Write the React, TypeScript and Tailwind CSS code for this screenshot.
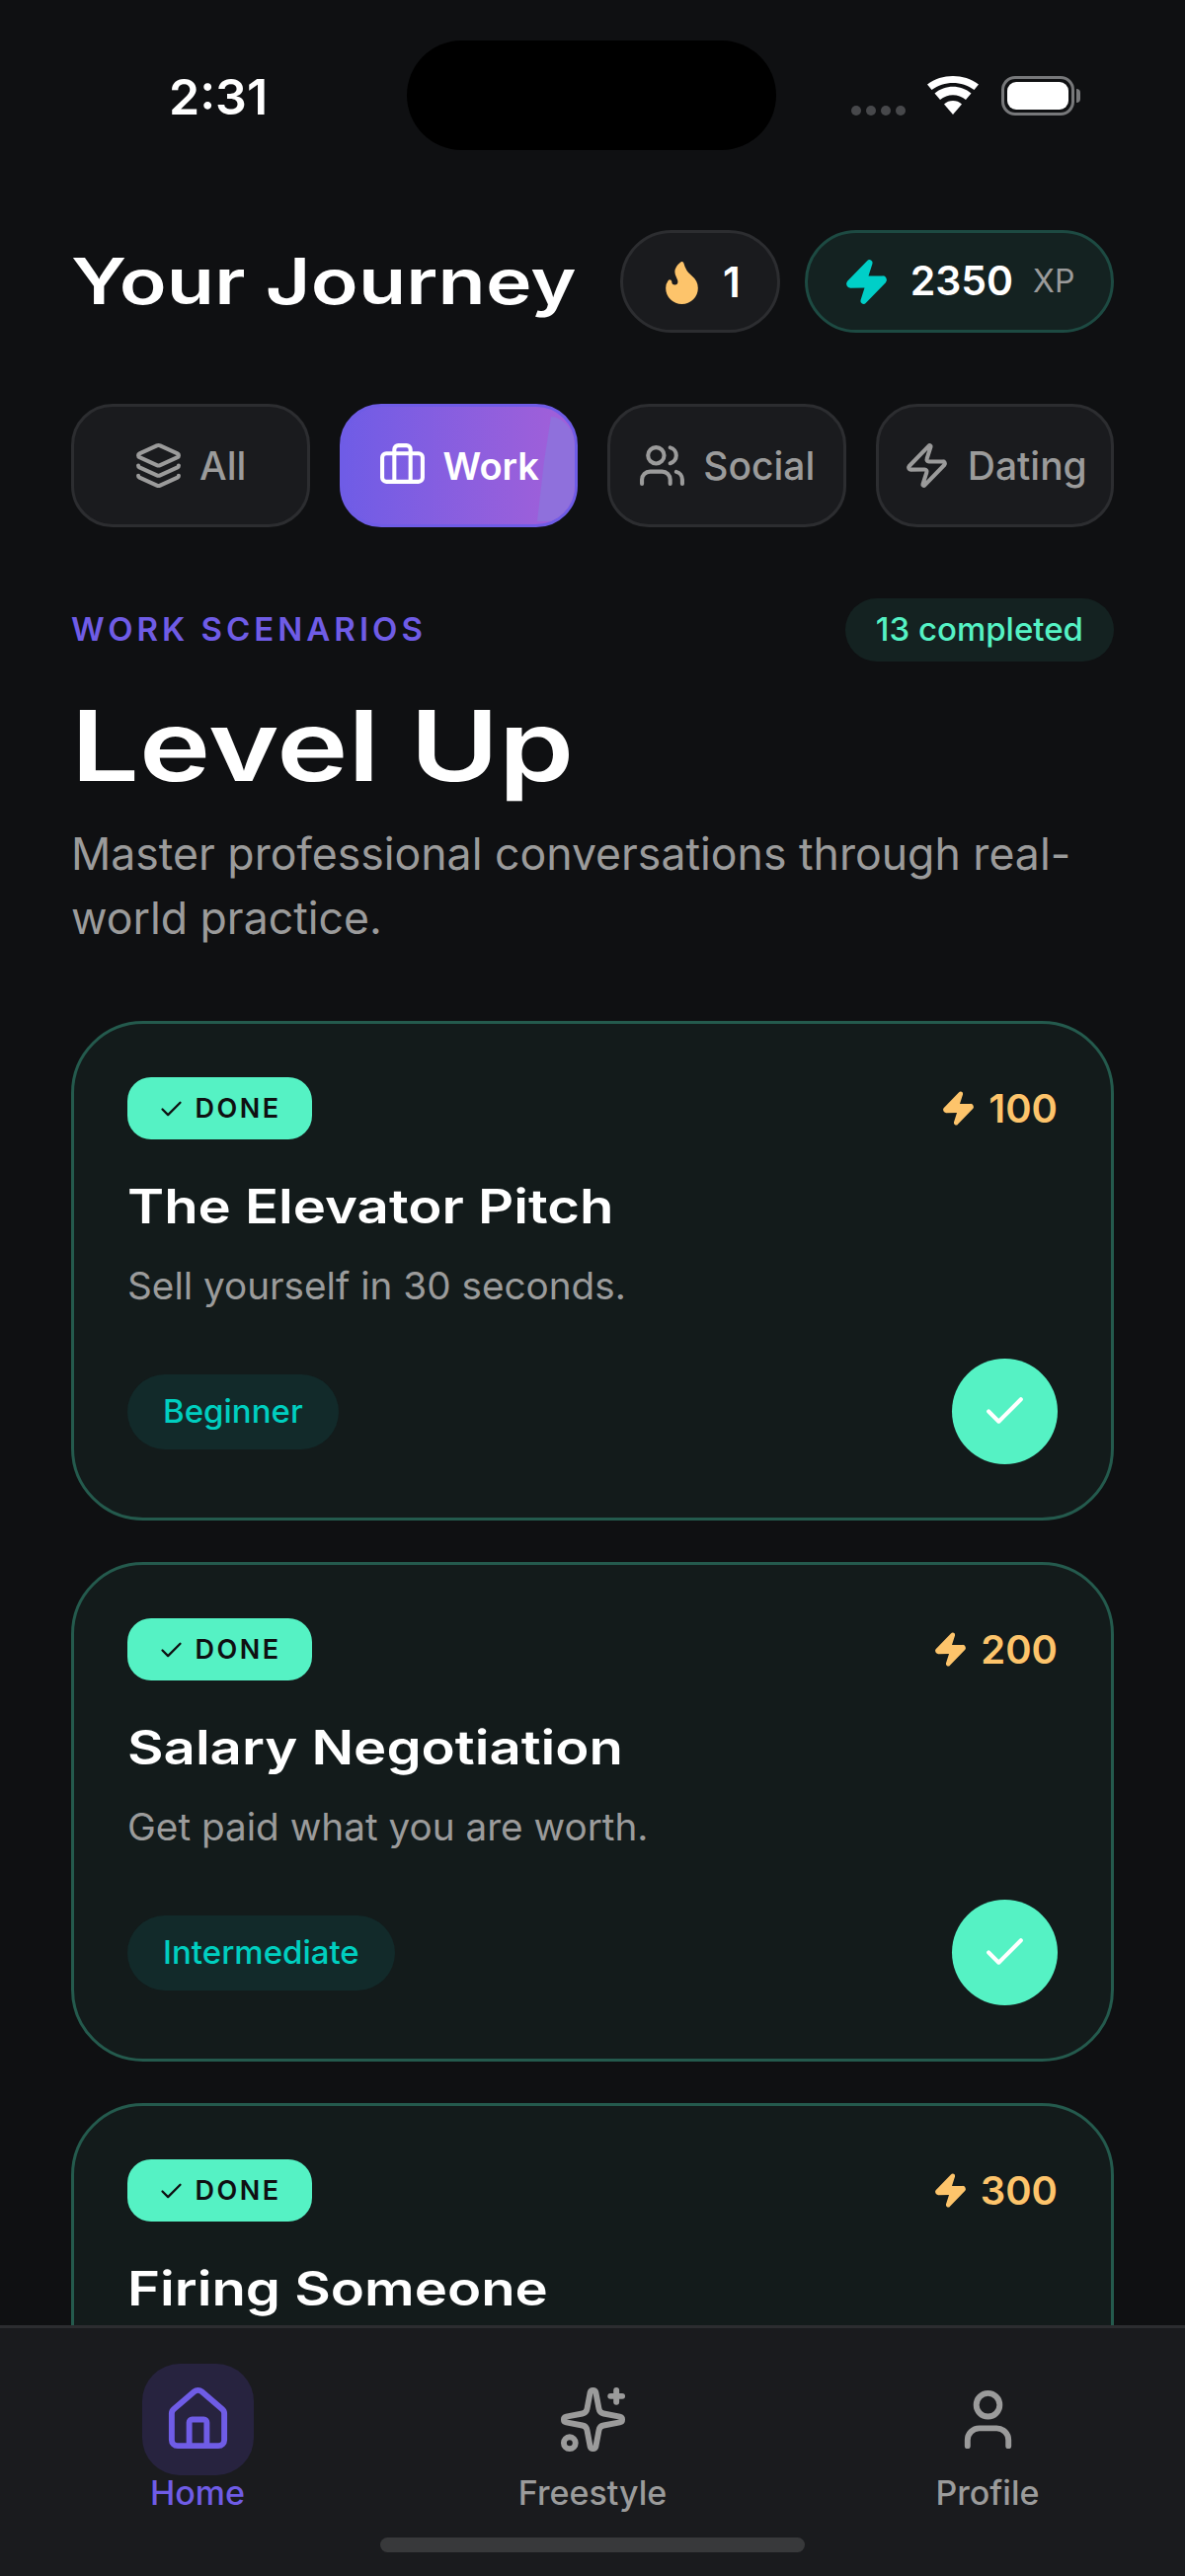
import { Briefcase, Check, Flame, House, Layers, Sparkles, User, Users, Zap } from "lucide-react";

const inter = "font-['Inter','Noto_Sans',sans-serif]";
const display = "font-['Inter','Liberation_Sans',sans-serif] font-semibold origin-left whitespace-nowrap";

const tabs = [
  { label: "All", Icon: Layers },
  { label: "Work", Icon: Briefcase, active: true },
  { label: "Social", Icon: Users },
  { label: "Dating", Icon: Zap },
];

// third card is cut off by the tab bar, only its top row and title show
const scenarios = [
  { title: "The Elevator Pitch", sub: "Sell yourself in 30 seconds.", level: "Beginner", xp: 100 },
  { title: "Salary Negotiation", sub: "Get paid what you are worth.", level: "Intermediate", xp: 200 },
  { title: "Firing Someone", xp: 300 },
];

const navItems = [
  { label: "Home", Icon: House, active: true },
  { label: "Freestyle", Icon: Sparkles },
  { label: "Profile", Icon: User },
];

function StatusBar() {
  return (
    <div className="h-[152px] pt-[41px] pl-[171px] pr-[106px] flex items-start justify-between">
      <span className="mt-[29px] text-[50px] leading-[56px] font-semibold text-white">2:31</span>
      <div className="w-[374px] h-[111px] rounded-[56px] bg-black ml-[141px]" />
      <div className="mt-[36px] flex items-center ml-auto">
        <div className="flex gap-[5px] mt-[30px] mr-[22px]">
          {[0, 1, 2, 3].map((i) => (
            <span key={i} className="w-[10px] h-[10px] rounded-full bg-[#47484b]" />
          ))}
        </div>
        <svg width="52" height="40" viewBox="0 0 52 40" className="mr-[23px]">
          <path d="M26 39 17 28.5c5-4.600 13-4.600 18 0Z" fill="#fff" />
          <path d="M13 24 7.500 17.500c10.500-9 26.500-9 37 0L39 24c-7.500-6.400-18.500-6.400-26 0Z" fill="#fff" />
          <path d="M4.500 14 0 8.500c15-11.300 37-11.300 52 0L47.500 14C35 4.500 17 4.500 4.500 14Z" fill="#fff" />
        </svg>
        <div className="w-[74px] h-[40px] rounded-[14px] border-[3px] border-[#77787a] p-[3px]">
          <div className="w-full h-full rounded-[9px] bg-white" />
        </div>
        <span className="w-[4px] h-[14px] ml-[2px] rounded-r-full bg-[#77787a]" />
      </div>
    </div>
  );
}

function Header() {
  return (
    <div className="mt-[81px] flex items-center justify-between">
      <h1 className={`${display} text-[64px] leading-[104px] text-white tracking-[0.2px] scale-x-[1.23]`}>Your Journey</h1>
      <div className="flex gap-[25px]">
        <div className="h-[104px] w-[162px] rounded-full border-[3px] border-[#2c2d30] bg-[#1a1b1e] flex items-center justify-center gap-[17px] pr-[2px]">
          <Flame size={49} fill="#fdc46b" stroke="#fdc46b" strokeWidth={2} />
          <span className="text-[42px] font-semibold text-white">1</span>
        </div>
        <div className="h-[104px] w-[313px] rounded-full border-[3px] border-[#1d4a42] bg-[#142221] flex items-center justify-center gap-[20px] pr-[2px]">
          <Zap size={49} fill="#00cfc8" stroke="#00cfc8" strokeWidth={2} />
          <span className="text-[41px] font-semibold text-white">2350</span>
          <span className="text-[32px] text-[#9b9b9b]">XP</span>
        </div>
      </div>
    </div>
  );
}

function Tabs() {
  return (
    <div className="mt-[72px] grid grid-cols-4 gap-[30px]">
      {tabs.map(({ label, Icon, active }) => (
        <div
          key={label}
          className={
            active
              ? "relative h-[125px] overflow-hidden rounded-[42px] border-[3px] border-[#6f5ce6] bg-linear-to-r from-[#6f5ce6] to-[#a35fd8] flex items-center justify-center gap-[17px] text-white font-semibold"
              : "h-[125px] rounded-[42px] border-[3px] border-[#2c2d30] bg-[#1a1b1e] flex items-center justify-center gap-[17px] text-[#9b9b9b] font-medium"
          }
        >
          {active && (
            <svg width="40" height="110" viewBox="0 0 40 110" className="absolute right-0 top-[8px]">
              <path d="M16 2c10 0 24 12 24 28v60c0 10-6 18-12 18H2L9 47Z" fill="#8f70dc" />
            </svg>
          )}
          <Icon size={49} strokeWidth={2} className="relative" />
          <span className={`relative leading-none ${active ? "text-[38px]" : "text-[39px]"}`}>{label}</span>
        </div>
      ))}
    </div>
  );
}

function Intro() {
  return (
    <div className="mt-[72px]">
      <div className="flex items-center justify-between">
        <span className="text-[33px] font-semibold tracking-[4px] text-[#6f5ce6]">WORK SCENARIOS</span>
        <span className="h-[64px] px-[31px] rounded-full bg-[#142221] flex items-center text-[33px] font-medium text-[#55f2c4]">
          13 completed
        </span>
      </div>
      <h2 className={`${display} mt-[25px] text-[99px] leading-[120px] text-white scale-x-[1.233]`}>Level Up</h2>
      <p className="mt-[18px] text-[44.6px] leading-[65px] text-[#9b9b9b]">
        Master professional conversations through real-world practice.
      </p>
    </div>
  );
}

function ScenarioCard({ title, sub, level, xp }: { title: string; sub?: string; level?: string; xp: number }) {
  return (
    <div className="h-[506px] shrink-0 rounded-[73px] border-[3px] border-[#245a4d] bg-[#131b1b] pt-[54px] px-[54px]">
      <div className="flex items-center justify-between">
        <span className="h-[63px] w-[187px] rounded-[24px] bg-[#55f2c4] flex items-center justify-center gap-[10px] pt-[2px] text-[27px] font-semibold tracking-[2.5px] text-[#0f1012]">
          <Check size={27} strokeWidth={2} />
          DONE
        </span>
        <span className="flex items-center gap-[12px] text-[40px] font-semibold text-[#fdc46b]">
          <Zap size={37} fill="#fdc46b" stroke="#fdc46b" strokeWidth={2} />
          {xp}
        </span>
      </div>
      <h3 className={`${display} mt-[37px] text-[48px] leading-[62px] text-white scale-x-[1.172]`}>{title}</h3>
      {sub && <p className="mt-[22px] text-[38.7px] leading-[54px] text-[#9b9b9b]">{sub}</p>}
      {level && (
        <div className="mt-[47px] flex items-center justify-between">
          <span className="h-[76px] rounded-full bg-[#122a2a] px-[36px] flex items-center text-[33px] font-medium text-[#00cfc0]">
            {level}
          </span>
          <span className="w-[107px] h-[107px] rounded-full bg-[#55f2c4] flex items-center justify-center text-white">
            <Check size={49} strokeWidth={2} />
          </span>
        </div>
      )}
    </div>
  );
}

function BottomNav() {
  return (
    <div className="absolute left-0 right-0 bottom-0 h-[254px] border-t-[3px] border-[#2c2d30] bg-[#1a1b1e]">
      <div className="grid grid-cols-3 pt-[36px]">
        {navItems.map(({ label, Icon, active }) => (
          <div key={label} className="flex flex-col items-center">
            <span
              className={`w-[113px] h-[113px] rounded-[38px] flex items-center justify-center ${
                active ? "bg-[#27233f] text-[#6f5ce6]" : "text-[#9b9b9b]"
              }`}
            >
              <Icon size={71} strokeWidth={2} />
            </span>
            <span className={`-mt-[2px] text-[34px] leading-[40px] font-medium ${active ? "text-[#6f5ce6]" : "text-[#9b9b9b]"}`}>
              {label}
            </span>
          </div>
        ))}
      </div>
      <div className="absolute left-[385px] bottom-[24px] w-[430px] h-[15px] rounded-full bg-[#38393b]" />
    </div>
  );
}

export default function App() {
  return (
    <div className={`${inter} relative w-[1200px] h-[2609px] overflow-hidden bg-[#0f1012]`}>
      <StatusBar />
      <div className="px-[72px]">
        <Header />
        <Tabs />
        <Intro />
        <div className="mt-[71px] flex flex-col gap-[42px]">
          {scenarios.map((s) => (
            <ScenarioCard key={s.title} {...s} />
          ))}
        </div>
      </div>
      <BottomNav />
    </div>
  );
}
